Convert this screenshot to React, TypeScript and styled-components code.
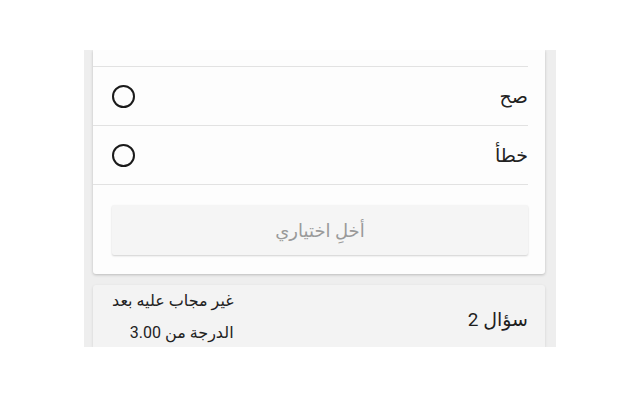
import React from 'react';
import styled, { createGlobalStyle } from 'styled-components';

const Global = createGlobalStyle`
  html, body {
    margin: 0;
    padding: 0;
    background: #ffffff;
  }
  body {
    font-family: Roboto, "DejaVu Sans", sans-serif;
  }
`;

const Column = styled.div`
  direction: rtl;
  width: 472px;
  height: 297px;
  margin: 50px auto 0;
  padding: 0 11px 0 9px;
  box-sizing: border-box;
  background: #eeeeee;
  overflow: hidden;
  display: flex;
  flex-direction: column;
  gap: 11px;
`;

const Card = styled.div`
  background: #fdfdfd;
  border-radius: 0 0 3px 3px;
  box-shadow: 0 1px 3px rgba(0, 0, 0, 0.22);
  padding: 16px 0 19px;
`;

const List = styled.ul`
  list-style: none;
  margin: 0 17px 0 0;
  padding: 0;
  border-top: 1px solid #e2e2e2;
`;

const Row = styled.li`
  display: flex;
  align-items: center;
  justify-content: space-between;
  height: 58px;
  padding-left: 19px;
  border-bottom: 1px solid #e2e2e2;
`;

const Label = styled.span`
  font-size: 19px;
  color: #222222;
`;

const Radio = styled.span`
  width: 19px;
  height: 19px;
  border: 2px solid #1a1a1a;
  border-radius: 50%;
`;

const ClearButton = styled.button`
  display: block;
  width: calc(100% - 36px);
  height: 50px;
  margin: 20px 17px 0 19px;
  border: none;
  border-radius: 2px;
  background: #f5f5f5;
  box-shadow: 0 1px 2px rgba(0, 0, 0, 0.18);
  font-family: inherit;
  font-size: 18px;
  color: #9a9a9a;
  direction: rtl;
`;

const QuestionCard = styled.div`
  background: #f3f3f3;
  border-radius: 3px 3px 0 0;
  box-shadow: 0 1px 3px rgba(0, 0, 0, 0.12);
  display: flex;
  align-items: center;
  justify-content: space-between;
  padding: 6px 17px 0 19px;
  height: 70px;
`;

const Title = styled.span`
  font-size: 19px;
  color: #1e1e1e;
`;

const Meta = styled.div`
  display: flex;
  flex-direction: column;
  gap: 12px;
  align-self: flex-start;
  margin-top: 0;
`;

const MetaLine = styled.span`
  font-size: 16px;
  line-height: 20px;
  color: #222222;
`;

const options = ['صح', 'خطأ'];

export default function App() {
  return (
    <>
      <Global />
      <Column>
        <Card>
          <List>
            {options.map((o) => (
              <Row key={o}>
                <Label>{o}</Label>
                <Radio />
              </Row>
            ))}
          </List>
          <ClearButton>أخلِ اختياري</ClearButton>
        </Card>
        <QuestionCard>
          <Title>سؤال 2</Title>
          <Meta>
            <MetaLine>غير مجاب عليه بعد</MetaLine>
            <MetaLine>الدرجة من 3.00</MetaLine>
          </Meta>
        </QuestionCard>
      </Column>
    </>
  );
}
